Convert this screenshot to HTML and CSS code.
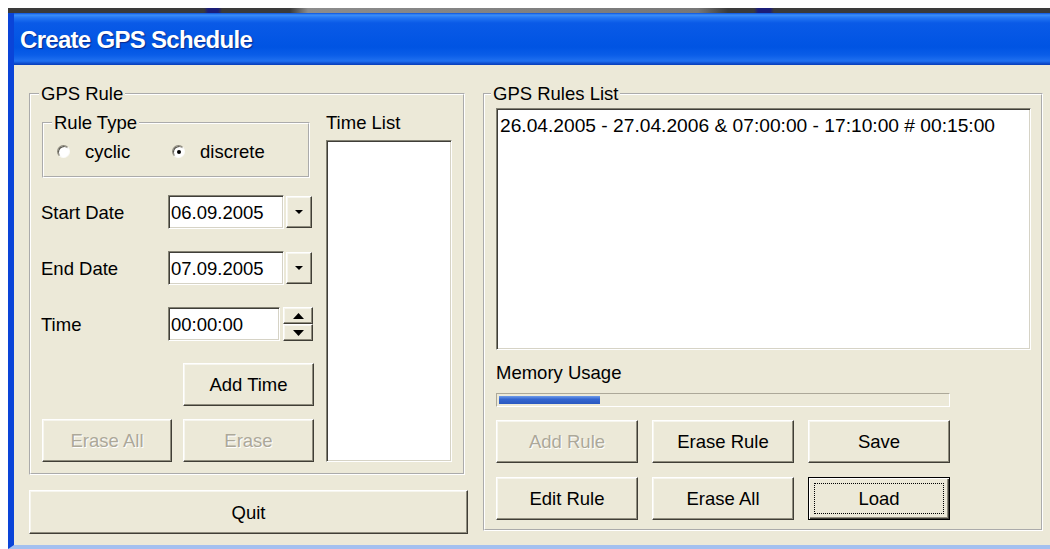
FILE: index.html
```html
<!DOCTYPE html>
<html lang="en">
<head>
<meta charset="utf-8">
<title>Create GPS Schedule</title>
<link rel="stylesheet" href="styles.css">
</head>
<body>
<div class="screen">
  <div class="backdrop"></div>
  <div class="window">
    <div class="titlebar"><span class="title">Create GPS Schedule</span></div>
    <div class="client">
      <div class="left-col">
        <fieldset class="group rule-group">
          <legend>GPS Rule</legend>
          <div class="rule-grid">
            <div class="rule-form">
              <fieldset class="group type-group">
                <legend>Rule Type</legend>
                <div class="radios">
                  <label class="radio"><span class="radio-dot"></span>cyclic</label>
                  <label class="radio checked"><span class="radio-dot"></span>discrete</label>
                </div>
              </fieldset>
              <div class="field-row first">
                <span class="field-label">Start Date</span>
                <span class="edit">06.09.2005</span>
                <span class="drop-btn"><svg width="8" height="4" viewBox="0 0 8 4"><path d="M0 0h8L4 4z"/></svg></span>
              </div>
              <div class="field-row">
                <span class="field-label">End Date</span>
                <span class="edit">07.09.2005</span>
                <span class="drop-btn"><svg width="8" height="4" viewBox="0 0 8 4"><path d="M0 0h8L4 4z"/></svg></span>
              </div>
              <div class="field-row">
                <span class="field-label">Time</span>
                <span class="edit time-edit">00:00:00</span>
                <span class="spin">
                  <span class="spin-btn"><svg width="11" height="6" viewBox="0 0 11 6"><path d="M5.5 0L11 6H0z"/></svg></span>
                  <span class="spin-btn"><svg width="11" height="6" viewBox="0 0 11 6"><path d="M0 0h11L5.5 6z"/></svg></span>
                </span>
              </div>
              <div class="add-row"><button class="btn">Add Time</button></div>
              <div class="erase-row">
                <button class="btn" disabled>Erase All</button>
                <button class="btn" disabled>Erase</button>
              </div>
            </div>
            <div class="time-list">
              <div class="list-label">Time List</div>
              <div class="listbox time-listbox"></div>
            </div>
          </div>
        </fieldset>
        <button class="btn quit">Quit</button>
      </div>

      <fieldset class="group rules-group">
        <legend>GPS Rules List</legend>
        <div class="listbox rules-list">
          <div class="list-item">26.04.2005 - 27.04.2006 &amp; 07:00:00 - 17:10:00 # 00:15:00</div>
        </div>
        <div class="mem-label">Memory Usage</div>
        <div class="progress"><div class="progress-fill" style="width:22.5%"></div></div>
        <div class="rule-buttons">
          <button class="btn" disabled>Add Rule</button>
          <button class="btn">Erase Rule</button>
          <button class="btn">Save</button>
          <button class="btn">Edit Rule</button>
          <button class="btn">Erase All</button>
          <button class="btn default"><span class="focus">Load</span></button>
        </div>
      </fieldset>
    </div>
  </div>
</div>
</body>
</html>
```
FILE: styles.css
```css
* { box-sizing: border-box; }

html, body {
  margin: 0;
  padding: 0;
  background: #fff;
}

body {
  font-family: "Liberation Sans", Arial, sans-serif;
  font-size: 18.5px;
  line-height: 21px;
  color: #000;
}

.screen {
  width: 1050px;
  height: 549px;
  padding: 8px 0 0 8px;
  overflow: hidden;
}

/* edge of the window lying behind the dialog */
.backdrop {
  height: 5px;
  background: linear-gradient(to right,
    #3a3a3a 0, #3a3a3a 196px, #1b1d78 200px, #1b1d78 210px, #3a3a3a 214px,
    #3a3a3a 282px, #8c8c8c 300px, #777 690px, #3a3a3a 720px,
    #3a3a3a 746px, #1b1d78 750px, #1b1d78 762px, #3a3a3a 766px, #3a3a3a 100%);
}

.window {
  border-left: 6px solid #0a44d8;
  border-bottom: 4px solid #a3c0ef;
  background: #ece9d8;
}

.titlebar {
  height: 52px;
  display: flex;
  align-items: center;
  padding-left: 6px;
  background: linear-gradient(to bottom,
    #0b52dc 0, #3c8ef8 2px, #2274f2 5px, #0a5ae7 10px, #0054e3 34px,
    #0a5de8 42px, #2070f0 48px, #0a46c6 51px, #0a3fb8 52px);
}

.title {
  font-family: "Liberation Sans", Arial, sans-serif;
  font-weight: bold;
  font-size: 24px;
  letter-spacing: -0.7px;
  color: #fff;
  text-shadow: 1px 1px 1px #0b2a8a;
}

.client {
  height: 480px;
  display: flex;
  align-items: flex-start;
  gap: 15px;
  padding: 18px 0 0 15px;
}

/* etched group frames */
fieldset.group {
  margin: 0;
  min-width: 0;
  border: 2px groove #fff;
}

.group > legend {
  padding: 0 2px;
  line-height: 21px;
}

.left-col {
  width: 439px;
  display: flex;
  flex-direction: column;
}

.rule-group {
  width: 436px;
  margin-left: 1px;
  padding: 8px 11px 11px 11px;
}

.rule-group > legend { margin-left: -3px; }

.rule-grid {
  display: grid;
  grid-template-columns: 272px 126px;
  column-gap: 12px;
}

.rule-form {
  display: flex;
  flex-direction: column;
}

.type-group {
  width: 268px;
  padding: 8px 12px 14px 13px;
}

.type-group > legend { margin-left: -5px; }

.radios {
  display: grid;
  grid-template-columns: 115px auto;
}

.radio {
  display: flex;
  align-items: center;
  gap: 15px;
}

.radio-dot {
  flex: none;
  width: 13px;
  height: 13px;
  border-radius: 50%;
  background: #fff;
  border: 1px solid;
  border-color: #8a877a #fbfbf8 #fbfbf8 #8a877a;
  box-shadow: inset 1px 1px 0 #5a584f;
  display: flex;
  align-items: center;
  justify-content: center;
}

.radio.checked .radio-dot::after {
  content: "";
  width: 4px;
  height: 4px;
  border-radius: 50%;
  background: #000;
}

.field-row {
  display: flex;
  align-items: center;
  height: 34px;
  margin-top: 22px;
}

.field-row.first { margin-top: 17px; }

.field-label {
  width: 127px;
  margin-left: -1px;
}

/* sunken white edit boxes */
.edit, .listbox {
  background: #fff;
  border: 1px solid;
  border-color: #848274 #fff #fff #848274;
  box-shadow: inset 1px 1px 0 #3f3e38, inset -1px -1px 0 #d6d3c6;
}

.edit {
  width: 116px;
  height: 34px;
  padding: 0 2px;
  display: flex;
  align-items: center;
}

.time-edit { width: 112px; }

/* raised bevel shared by buttons */
.btn, .drop-btn, .spin-btn {
  background: #ece9d8;
  border: 1px solid;
  border-color: #fff #403e36 #403e36 #fff;
  box-shadow: inset -1px -1px 0 #908d7e, inset 1px 1px 0 #f7f6ef;
}

.drop-btn {
  width: 26px;
  height: 32px;
  margin-left: 2px;
  display: flex;
  align-items: center;
  justify-content: center;
}

.spin {
  width: 30px;
  height: 34px;
  margin-left: 3px;
  display: flex;
  flex-direction: column;
}

.spin-btn {
  flex: 1;
  display: flex;
  align-items: center;
  justify-content: center;
}

.btn {
  appearance: none;
  margin: 0;
  padding: 0;
  height: 43px;
  font: inherit;
  line-height: 21px;
  color: #000;
  display: flex;
  align-items: center;
  justify-content: center;
}

.btn:disabled {
  color: #aca899;
  text-shadow: 1px 1px 0 #fff;
}

.add-row {
  margin-top: 22px;
  display: flex;
  justify-content: flex-end;
}

.add-row .btn { width: 131px; }

.erase-row {
  margin-top: 13px;
  display: grid;
  grid-template-columns: 130px 131px;
  column-gap: 11px;
}

.time-listbox {
  margin-top: 7px;
  height: 322px;
}

.quit {
  margin-top: 15px;
  width: 439px;
  height: 44px;
}

.rules-group {
  width: 560px;
  padding: 4px 10px 9px 11px;
}

.rules-group > legend { margin-left: -5px; }

.rules-list {
  height: 242px;
  padding: 6px 3px;
}

.list-item { font-size: 19.2px; }

.mem-label { margin-top: 12px; }

.progress {
  margin-top: 10px;
  width: 454px;
  height: 14px;
  padding: 2px;
  border: 1px solid;
  border-color: #aca899 #fff #fff #aca899;
}

.progress-fill {
  height: 100%;
  background: linear-gradient(to bottom, #6e9be8 0, #3466d0 40%, #2a58c0 100%);
}

.rule-buttons {
  margin-top: 13px;
  display: grid;
  grid-template-columns: repeat(3, 142px);
  grid-auto-rows: 43px;
  gap: 14px;
}

/* default push button with focus rectangle */
.btn.default {
  padding: 5px;
  border-color: #000;
  box-shadow: inset 1px 1px 0 #fff, inset -1px -1px 0 #403e36, inset -2px -2px 0 #908d7e;
}

.focus {
  flex: 1;
  align-self: stretch;
  display: flex;
  align-items: center;
  justify-content: center;
  border: 1px dotted #000;
}
```
